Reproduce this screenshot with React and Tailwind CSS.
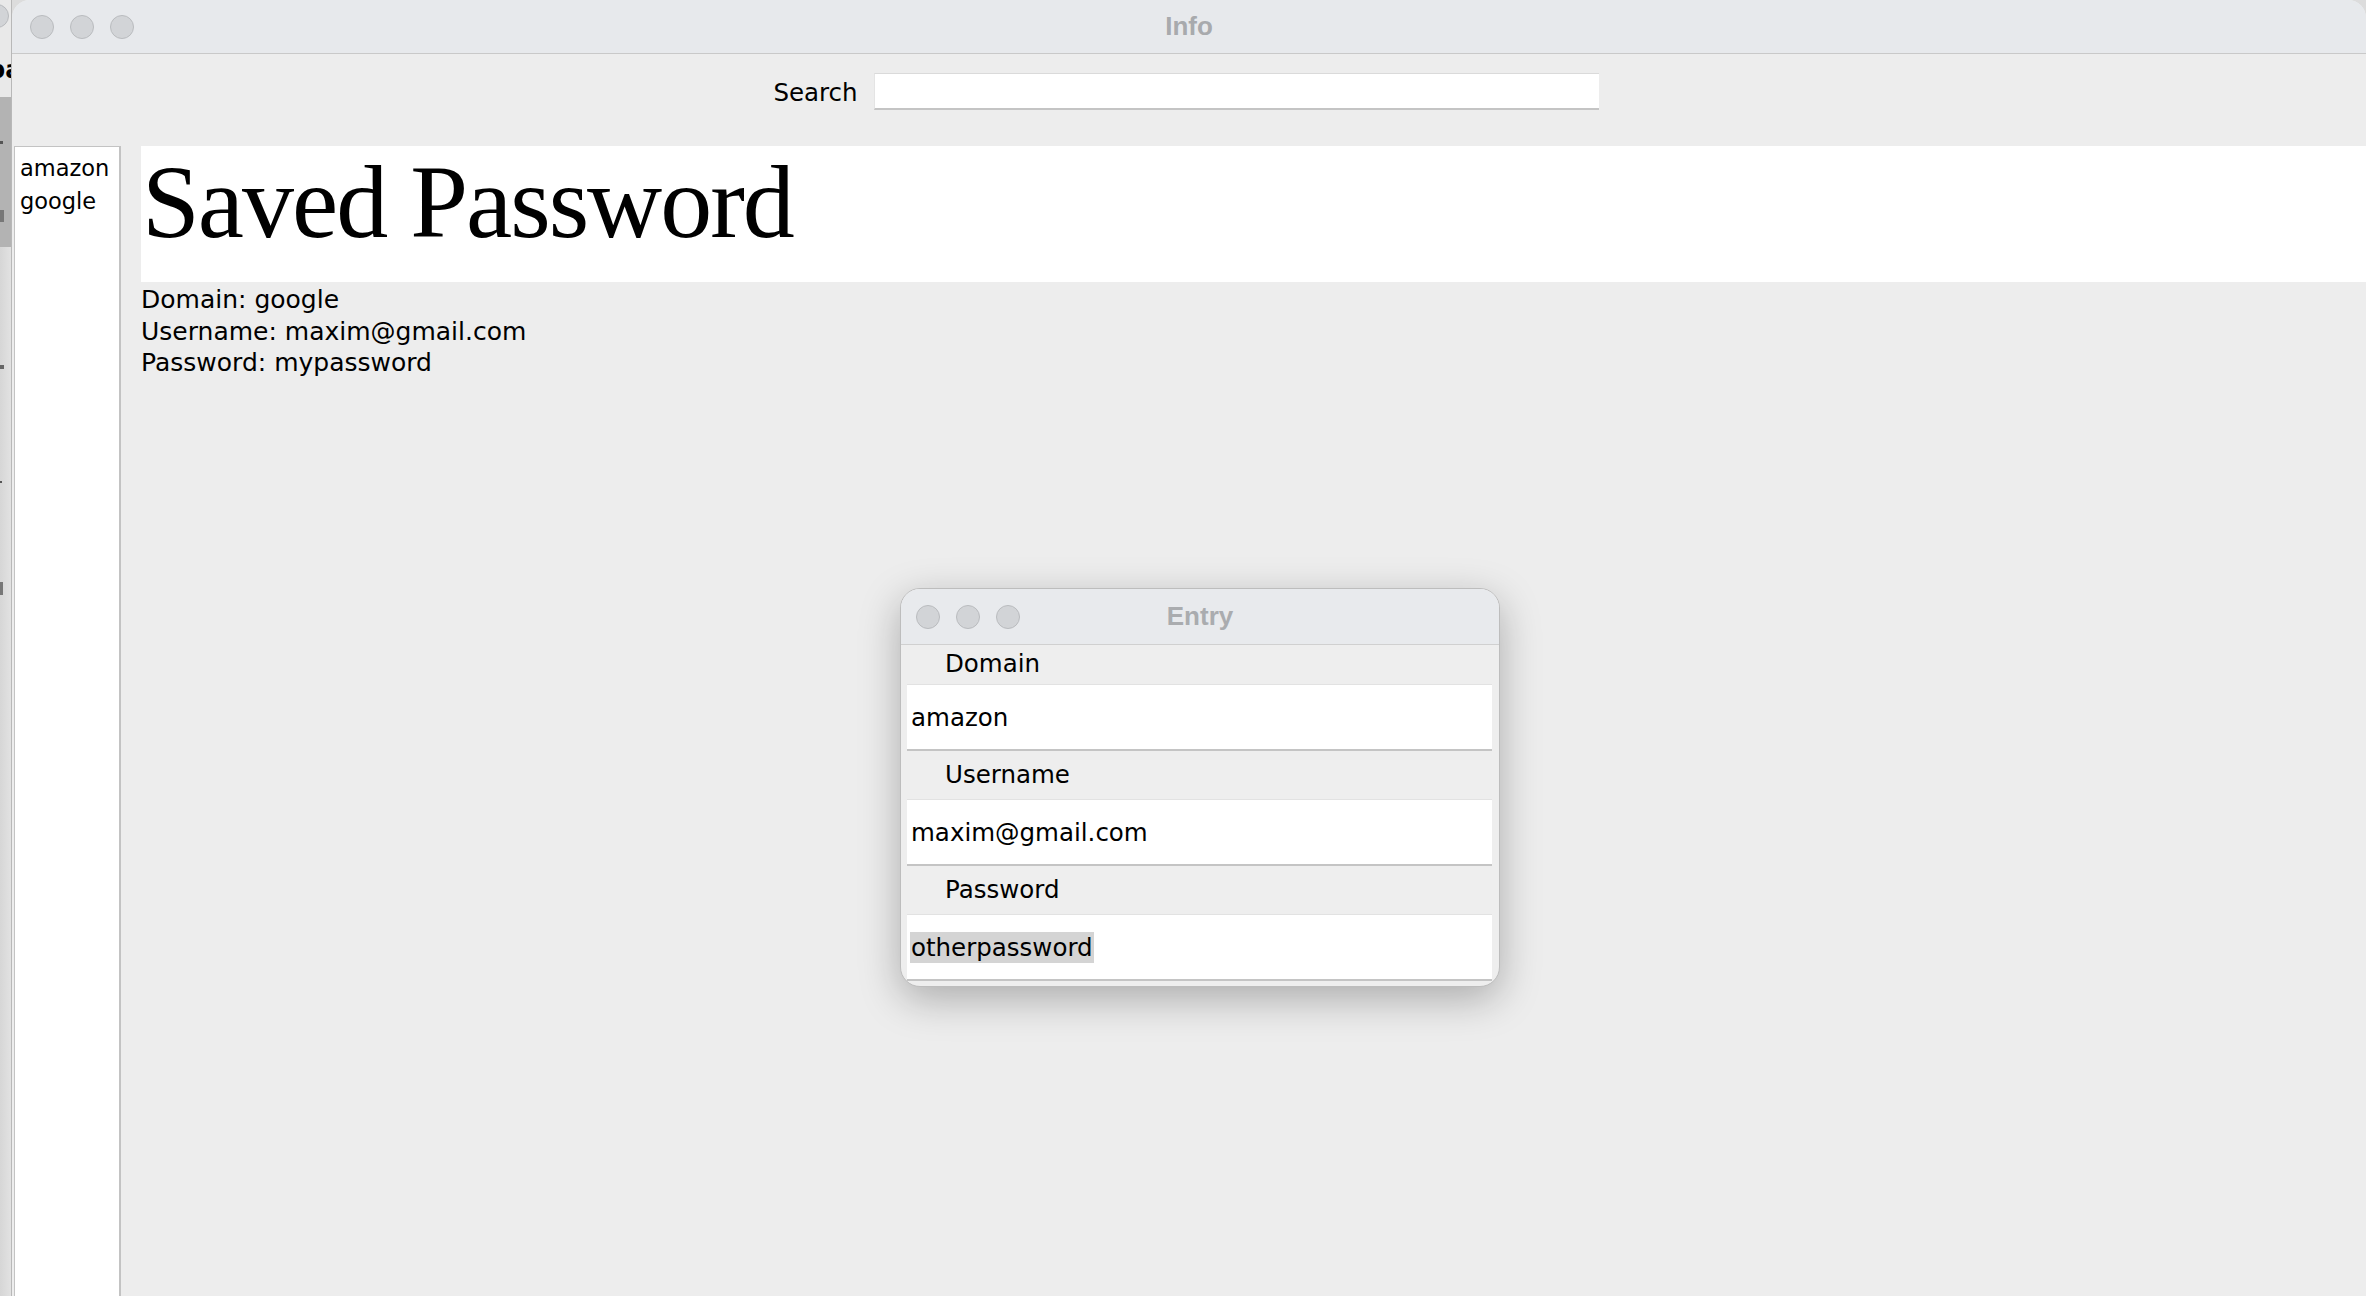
import React from 'react';

const uiFont = { fontFamily: '"DejaVu Sans", "Liberation Sans", sans-serif' };

const entries = ['amazon', 'google'];

const TrafficLights = ({ className = '' }) => (
  <div className={`flex items-center gap-[16px] ${className}`}>
    {[0, 1, 2].map((i) => (
      <span
        key={i}
        className="block w-[24px] h-[24px] rounded-full bg-[#d2d4d7] border border-[#b9bbbe]"
      />
    ))}
  </div>
);

// window peeking out behind the main one on the far left
const BehindWindow = () => (
  <div className="relative w-[12px] shrink-0 h-full flex flex-col border-r border-[#b8b8b8] overflow-hidden">
    <div className="h-[97px] bg-[#e9e9e9] relative">
      <span className="absolute -left-[15px] top-[4px] w-[24px] h-[24px] rounded-full bg-[#d2d4d7] border border-[#b9bbbe]" />
      <span
        className="absolute -left-[12px] top-[58px] text-[24px] font-bold text-black leading-none"
        style={uiFont}
      >
        pa
      </span>
    </div>
    <div className="h-[150px] bg-[#b3b3b3] relative">
      <span className="absolute left-0 top-[44px] w-[3px] h-[3px] bg-[#555]" />
      <span className="absolute left-0 top-[113px] w-[4px] h-[12px] bg-[#777]" />
    </div>
    <div className="flex-1 bg-gradient-to-r from-[#d6d6d6] to-[#e2e2e2] relative">
      <span className="absolute left-0 top-[118px] w-[4px] h-[4px] bg-[#666]" />
      <span className="absolute left-0 top-[234px] w-[2px] h-[2px] bg-[#555]" />
      <span className="absolute left-0 top-[335px] w-[3px] h-[13px] bg-[#777]" />
    </div>
  </div>
);

const Field = ({ value, selected }) => (
  <div className="h-[67px] bg-white border-t border-t-[#e2e2e2] border-b-2 border-b-[#c4c4c4] flex items-center pl-[3px]">
    <span className={`leading-[31px] px-[1px] ${selected ? 'bg-[#d4d4d4]' : ''}`}>{value}</span>
  </div>
);

const EntryDialog = () => (
  <div
    className="absolute left-[900px] top-[588px] w-[600px] h-[399px] rounded-[20px] border border-[#bdbdbd] bg-[#eeeeee] shadow-[0_12px_40px_rgba(0,0,0,0.28)] overflow-hidden flex flex-col text-[24.5px] text-black"
    style={uiFont}
  >
    <div className="h-[56px] shrink-0 bg-[#e8eaed] border-b border-[#d0d0d0] grid grid-cols-[1fr_auto_1fr] items-center">
      <TrafficLights className="pl-[15px]" />
      <span
        className="text-[26px] font-bold text-[#aaacaf]"
        style={{ fontFamily: '"Liberation Sans", Arial, sans-serif' }}
      >
        Entry
      </span>
      <span />
    </div>
    <div className="pl-[6px] pr-[7px]">
      <div className="h-[39px] flex items-center pl-[38px]">Domain</div>
      <Field value="amazon" />
      <div className="h-[48px] flex items-center pl-[38px]">Username</div>
      <Field value="maxim@gmail.com" />
      <div className="h-[48px] flex items-center pl-[38px]">Password</div>
      <Field value="otherpassword" selected />
    </div>
  </div>
);

export default function App() {
  return (
    <div className="relative w-[2366px] h-[1296px] overflow-hidden flex bg-[#dcdcdc]">
      <BehindWindow />

      <div className="flex-1 h-full flex flex-col bg-[#ededed] rounded-tl-[18px] rounded-tr-[18px] overflow-hidden" style={uiFont}>
        {/* title bar */}
        <div className="h-[54px] shrink-0 bg-[#e7e9ec] border-b border-[#c9c9c9] grid grid-cols-[1fr_auto_1fr] items-center">
          <TrafficLights className="pl-[18px]" />
          <span
            className="text-[26px] font-bold text-[#a8aaad]"
            style={{ fontFamily: '"Liberation Sans", Arial, sans-serif' }}
          >
            Info
          </span>
          <span />
        </div>

        {/* search row */}
        <div className="h-[92px] shrink-0 flex justify-center items-start pt-[18px] pr-[6px]">
          <div className="flex items-center gap-[16px]">
            <span className="text-[24.5px] text-black pt-[3px]">Search</span>
            <div className="w-[725px] h-[37px] bg-white border-t border-t-[#dadada] border-l border-l-[#e4e4e4] border-b-2 border-b-[#c4c4c4]" />
          </div>
        </div>

        {/* content */}
        <div className="flex-1 flex min-h-0">
          <div className="ml-[2px] w-[107px] shrink-0 bg-white border-t border-l border-[#c3c3c3] border-r-2 border-r-[#c3c3c3] pt-[5px] pl-[5px] text-[22.5px] leading-[33px] text-black overflow-hidden">
            {entries.map((e) => (
              <div key={e}>{e}</div>
            ))}
          </div>

          <div className="flex-1 ml-[20px] flex flex-col">
            <div className="h-[136px] bg-white pt-[4px] pl-[1px]">
              <h1
                className="text-[104px] leading-none tracking-[-2px] text-black font-normal"
                style={{ fontFamily: '"Liberation Serif", "Times New Roman", serif' }}
              >
                Saved Password
              </h1>
            </div>
            <div className="text-[25px] leading-[31.5px] text-black pt-[2px]">
              <div>Domain: google</div>
              <div>Username: maxim@gmail.com</div>
              <div>Password: mypassword</div>
            </div>
          </div>
        </div>
      </div>

      <EntryDialog />
    </div>
  );
}
